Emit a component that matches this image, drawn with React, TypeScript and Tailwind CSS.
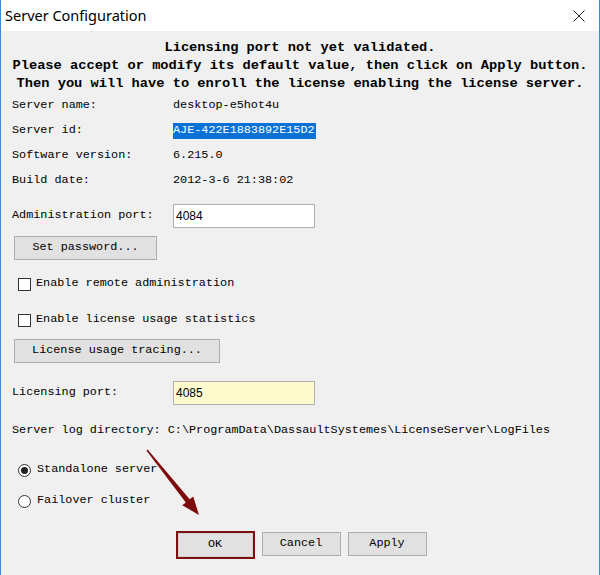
const mono = { fontFamily: '"Liberation Mono", "DejaVu Sans Mono", monospace' };

function InfoRow({ label, children }: { label: string; children: React.ReactNode }) {
  return (
    <div className="flex h-[25px] items-center">
      <span className="w-[161px] shrink-0">{label}</span>
      {children}
    </div>
  );
}

function WinButton({ label, className = "" }: { label: string; className?: string }) {
  return (
    <button
      className={
        "h-[24px] border border-[#adadad] bg-[#e1e1e1] text-center text-[11.8px] text-black " +
        className
      }
    >
      {label}
    </button>
  );
}

function Check({ label }: { label: string }) {
  return (
    <div className="flex h-[24px] items-center pl-[6px]">
      <span className="mr-[5px] h-[13px] w-[13px] border border-[#333] bg-white" />
      <span>{label}</span>
    </div>
  );
}

function Radio({ label, checked }: { label: string; checked?: boolean }) {
  return (
    <div className="flex h-[24px] items-center pl-[6px]">
      <span className="mr-[6px] flex h-[13px] w-[13px] items-center justify-center rounded-full border border-[#333] bg-white">
        {checked && <span className="h-[7px] w-[7px] rounded-full bg-[#222]" />}
      </span>
      <span>{label}</span>
    </div>
  );
}

export default function App() {
  return (
    <div className="relative flex h-[575px] w-[600px] flex-col overflow-hidden border-x border-[#3a8bd8] bg-[#f0f0f0]">
      {/* title bar */}
      <div className="flex h-[31px] shrink-0 items-center justify-between bg-white pl-[4px] pr-[14px]">
        <span
          className="text-[14.5px] text-black"
          style={{ fontFamily: '"Segoe UI", "Noto Sans", "Open Sans", sans-serif' }}
        >
          Server Configuration
        </span>
        <svg width="12" height="12" viewBox="0 0 12 12">
          <path d="M0.5 0.5 L11.5 11.5 M11.5 0.5 L0.5 11.5" stroke="#222" strokeWidth="1" />
        </svg>
      </div>

      <div className="flex flex-col text-[11.8px] text-black" style={mono}>
        <div className="pt-[8px] text-center text-[13.7px] font-bold leading-[18px]">
          <p>Licensing port not yet validated.</p>
          <p>Please accept or modify its default value, then click on Apply button.</p>
          <p>Then you will have to enroll the license enabling the license server.</p>
        </div>

        <div className="pl-[11px]">
          <InfoRow label="Server name:">
            <span>desktop-e5hot4u</span>
          </InfoRow>
          <InfoRow label="Server id:">
            <span className="flex h-[16px] w-[143px] items-center bg-[#0a72d6] text-white">
              AJE-422E1883892E15D2
            </span>
          </InfoRow>
          <InfoRow label="Software version:">
            <span>6.215.0</span>
          </InfoRow>
          <InfoRow label="Build date:">
            <span>2012-3-6 21:38:02</span>
          </InfoRow>

          <div className="mt-[11px] flex h-[24px] items-center">
            <span className="w-[161px] shrink-0">Administration port:</span>
            <div
              className="flex h-[24px] w-[142px] items-center border border-[#b0b0b0] bg-white pl-[2px] text-[12px]"
              style={{ fontFamily: '"Liberation Sans", Arial, sans-serif' }}
            >
              4084
            </div>
          </div>

          <WinButton label="Set password..." className="ml-[2px] mt-[8px] w-[143px]" />

          <div className="mt-[12px]">
            <Check label="Enable remote administration" />
          </div>
          <div className="mt-[12px]">
            <Check label="Enable license usage statistics" />
          </div>

          <WinButton label="License usage tracing..." className="ml-[2px] mt-[7px] w-[206px]" />

          <div className="mt-[18px] flex h-[24px] items-center">
            <span className="w-[161px] shrink-0">Licensing port:</span>
            <div
              className="flex h-[24px] w-[142px] items-center border border-[#b0b0b0] bg-[#fefccf] pl-[2px] text-[12px]"
              style={{ fontFamily: '"Liberation Sans", Arial, sans-serif' }}
            >
              4085
            </div>
          </div>

          <div className="mt-[14px] flex h-[24px] items-center">
            Server log directory: C:\ProgramData\DassaultSystemes\LicenseServer\LogFiles
          </div>

          <div className="mt-[15px]">
            <Radio label="Standalone server" checked />
          </div>
          <div className="mt-[7px]">
            <Radio label="Failover cluster" />
          </div>
        </div>

        <div className="mt-[18px] flex justify-center gap-[7px] pl-[2px]">
          <div className="border-2 border-[#7d0f0f]">
            <WinButton label="OK" className="block w-[75px] border-[#d0d0d0]" />
          </div>
          <WinButton label="Cancel" className="mt-[1px] w-[79px]" />
          <WinButton label="Apply" className="mt-[1px] w-[79px]" />
        </div>
      </div>

      {/* annotation arrow */}
      <svg
        className="pointer-events-none absolute -left-px top-0"
        width="600"
        height="575"
        viewBox="0 0 600 575"
      >
        <polygon
          points="147.6,449.5 189.7,499.3 193.2,496.5 199,515 182.3,505.3 185.8,502.5 146.4,450.5"
          fill="#7e0b0b"
        />
      </svg>
    </div>
  );
}
